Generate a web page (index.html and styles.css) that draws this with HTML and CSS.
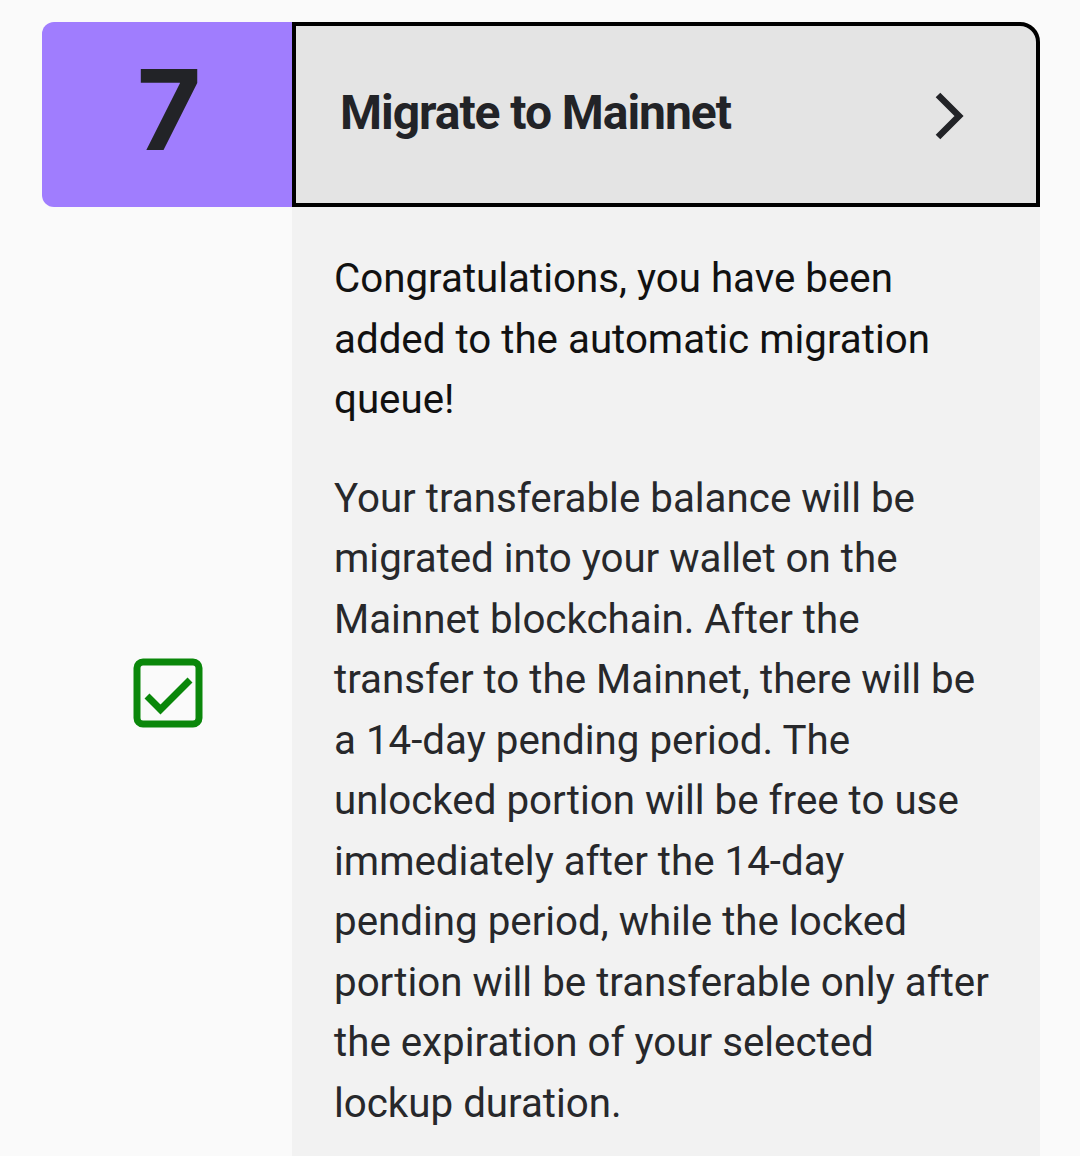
FILE: index.html
```html
<!DOCTYPE html>
<html lang="en">
<head>
<meta charset="utf-8">
<link rel="stylesheet" href="styles.css">
</head>
<body>
<div class="step">
  <div class="num">7</div>
  <div class="head">
    <span class="title">Migrate to Mainnet</span>
    <svg class="chev" width="34" height="50" viewBox="0 0 34 50"><path d="M6 4 L27 25 L6 46" fill="none" stroke="#222327" stroke-width="6.5"/></svg>
  </div>
  <div class="side">
    <svg class="check" width="72" height="72" viewBox="0 0 72 72"><rect x="5" y="5" width="62" height="62" rx="6" fill="none" stroke="#0a870a" stroke-width="7"/><path d="M15 39 L28.5 52.5 L58 23" fill="none" stroke="#0a870a" stroke-width="7"/></svg>
  </div>
  <div class="body">
    <p class="p1">Congratulations, you have been added to the automatic migration queue!</p>
    <p class="p2">Your transferable balance will be migrated into your wallet on the Mainnet blockchain. After the transfer to the Mainnet, there will be a 14-day pending period. The unlocked portion will be free to use immediately after the 14-day pending period, while the locked portion will be transferable only after the expiration of your selected lockup duration.</p>
  </div>
</div>
</body>
</html>
```

FILE: styles.css
```css
html, body {
  margin: 0;
  padding: 0;
  background: #fafafa;
}
body {
  padding: 22px 40px 0 42px;
}
.step {
  display: grid;
  grid-template-columns: 250px 748px;
  grid-template-rows: 185px auto;
}
.num {
  background: #a07dfe;
  border-radius: 12px 0 0 12px;
  display: flex;
  align-items: center;
  justify-content: center;
  font-family: Inter, "Liberation Sans", sans-serif;
  font-weight: 700;
  font-size: 111px;
  color: #222327;
  padding-left: 4px;
  padding-bottom: 10px;
}
.head {
  box-sizing: border-box;
  background: #e4e4e4;
  border: 4px solid #000;
  border-radius: 0 20px 0 0;
  display: flex;
  align-items: center;
  justify-content: space-between;
  padding: 0 70px 4px 44px;
}
.title {
  font-family: Roboto, "Liberation Sans", sans-serif;
  font-weight: 700;
  font-size: 48px;
  letter-spacing: -1.05px;
  color: #222327;
}
.chev {
  display: block;
  margin-top: 6px;
}
.side {
  display: flex;
  align-items: center;
  justify-content: center;
  padding-left: 2px;
}
.check {
  display: block;
}
.body {
  background: #f2f2f2;
  padding: 42px 48px 45px 42px;
  font-family: Roboto, "Liberation Sans", sans-serif;
  font-size: 40.3px;
  line-height: 60.5px;
}
.body p {
  margin: 0;
}
.p1 {
  color: #111;
}
.p2 {
  color: #27282b;
  margin-top: 38px !important;
}
```
